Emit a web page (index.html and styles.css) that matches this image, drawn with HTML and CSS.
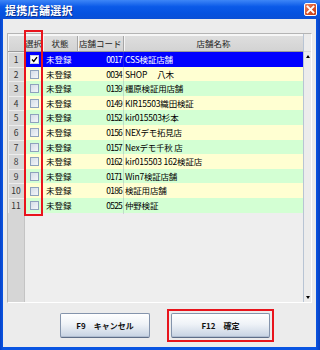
FILE: index.html
```html
<!DOCTYPE html>
<html lang="ja">
<head>
<meta charset="utf-8">
<link rel="stylesheet" href="styles.css">
</head>
<body>
<div class="window">
  <div class="titlebar">
    <span class="title">提携店舗選択</span>
    <span class="close"><svg width="11" height="11" viewBox="0 0 11 11"><path d="M2.5 2.5 L8.5 8.5 M8.5 2.5 L2.5 8.5" stroke="#fff" stroke-width="1.8" stroke-linecap="square"/></svg></span>
  </div>
  <div class="client">
    <div class="tablebox">
      <div class="grid">
        <div class="hdr">
          <div class="hc corner"></div>
          <div class="hc">選択</div>
          <div class="hc">状態</div>
          <div class="hc left">店舗コード</div>
          <div class="hc last">店舗名称</div>
        </div>
        <div class="row sel"><div class="rh">1</div><div class="chk"><span class="box on"><svg width="7" height="7" viewBox="0 0 7 7"><path d="M1 3.5 L2.8 5.5 L6 1.2" stroke="#000" stroke-width="1.4" fill="none"/></svg></span></div><div class="st">未登録</div><div class="cd">0017</div><div class="nm">CSS検証店舗</div></div>
        <div class="row y"><div class="rh">2</div><div class="chk"><span class="box"></span></div><div class="st">未登録</div><div class="cd">0034</div><div class="nm">SHOP　 八木</div></div>
        <div class="row g"><div class="rh">3</div><div class="chk"><span class="box"></span></div><div class="st">未登録</div><div class="cd">0139</div><div class="nm">橿原検証用店舗</div></div>
        <div class="row y"><div class="rh">4</div><div class="chk"><span class="box"></span></div><div class="st">未登録</div><div class="cd">0149</div><div class="nm">KIR15503織田検証</div></div>
        <div class="row g"><div class="rh">5</div><div class="chk"><span class="box"></span></div><div class="st">未登録</div><div class="cd">0152</div><div class="nm">kir015503杉本</div></div>
        <div class="row y"><div class="rh">6</div><div class="chk"><span class="box"></span></div><div class="st">未登録</div><div class="cd">0156</div><div class="nm">NEXデモ拓見店</div></div>
        <div class="row g"><div class="rh">7</div><div class="chk"><span class="box"></span></div><div class="st">未登録</div><div class="cd">0157</div><div class="nm">Nexデモ千秋 店</div></div>
        <div class="row y"><div class="rh">8</div><div class="chk"><span class="box"></span></div><div class="st">未登録</div><div class="cd">0162</div><div class="nm">kir015503 162検証店</div></div>
        <div class="row g"><div class="rh">9</div><div class="chk"><span class="box"></span></div><div class="st">未登録</div><div class="cd">0171</div><div class="nm">Win7検証店舗</div></div>
        <div class="row y"><div class="rh">10</div><div class="chk"><span class="box"></span></div><div class="st">未登録</div><div class="cd">0186</div><div class="nm">検証用店舗</div></div>
        <div class="row g"><div class="rh">11</div><div class="chk"><span class="box"></span></div><div class="st">未登録</div><div class="cd">0525</div><div class="nm">仲野検証</div></div>
        <div class="filler"><div class="rh-fill"></div></div>
      </div>
      <div class="scrollbar">
        <div class="sb-top"></div>
        <div class="sb-btn"><span class="arrow-up"></span></div>
        <div class="sb-track"></div>
        <div class="sb-btn"><span class="arrow-down"></span></div>
      </div>
      <div class="highlight"></div>
    </div>
    <div class="buttons">
      <button class="btn cancel">F9　キャンセル</button>
      <div class="redbox"><button class="btn ok">F12　確定</button></div>
    </div>
  </div>
</div>
</body>
</html>
```

FILE: styles.css
```css
html, body {
  margin: 0;
  padding: 0;
}
body {
  width: 320px;
  height: 350px;
  overflow: hidden;
  font-family: "Noto Sans CJK JP", "Noto Sans", sans-serif;
  background: #0a50dc;
}
.window {
  width: 320px;
  height: 350px;
  display: flex;
  flex-direction: column;
  background: linear-gradient(90deg, #0842c8, #0a55e2 3px, #0a55e2 316px, #0840c0);
}
.titlebar {
  height: 19px;
  flex: none;
  display: flex;
  align-items: center;
  justify-content: space-between;
  padding: 0 3px 0 5px;
  background: linear-gradient(#3d86f7, #0b5ae8 35%, #0552e0 70%, #0a4fd6);
}
.title {
  color: #fff;
  font-weight: bold;
  font-size: 11px;
  letter-spacing: 0.3px;
  text-shadow: 1px 1px 0 #0a2f8f;
}
.close {
  width: 11px;
  height: 11px;
  border: 1px solid #fff;
  border-radius: 2px;
  background: linear-gradient(135deg, #ee8a6a, #d9542c 50%, #c23c16);
  display: flex;
  align-items: center;
  justify-content: center;
}
.client {
  flex: 1;
  margin: 0 4px 3px 3px;
  background: #ececec;
  display: flex;
  flex-direction: column;
}
.tablebox {
  position: relative;
  margin: 14px 0 0 4px;
  width: 305px;
  height: 270px;
  box-sizing: border-box;
  border: 1px solid;
  border-color: #b4b4b4 #ffffff #ffffff #b4b4b4;
  display: flex;
}
.grid {
  width: 295px;
  display: flex;
  flex-direction: column;
  background: #eeeeee;
}
.hdr, .row {
  display: grid;
  grid-template-columns: 17px 18px 35px 46px 179px;
}
.hdr {
  height: 18px;
  box-sizing: border-box;
  border-top: 2px solid #f6f6f6;
  background: linear-gradient(#dedede, #d3d3d3);
  border-bottom: 1px solid #9a9a9a;
}
.hc {
  font-size: 8.5px;
  line-height: 15px;
  color: #222;
  text-align: center;
  border-right: 1px solid #a6a6a6;
  box-shadow: inset 1px 0 0 #f4f4f4;
  white-space: nowrap;
  overflow: hidden;
}
.hc.left {
  text-align: left;
  padding-left: 1px;
}
.hc.last {
  border-right: none;
}
.row {
  height: 14.6px;
  font-size: 8.5px;
  line-height: 14.6px;
  color: #000;
}
.row.y { background: #ffffd2; }
.row.g { background: #d3ffd3; }
.row.sel { background: #0000ff; color: #fff; }
.rh {
  background: #d6d6d6;
  color: #333;
  text-align: center;
  box-sizing: border-box;
  border-right: 1px solid #a8a8a8;
  border-bottom: 1px solid #bcbcbc;
  box-shadow: inset 1px 1px 0 #ececec;
}
.chk {
  display: flex;
  align-items: center;
  justify-content: center;
}
.box {
  width: 9px;
  height: 9px;
  box-sizing: border-box;
  border: 1px solid #8ea2bd;
  background: linear-gradient(135deg, #d5dde8, #f4f6f9);
  display: flex;
  align-items: center;
  justify-content: center;
}
.box.on {
  background: #fff;
  border-color: #c8d0dc;
}
.st {
  padding-left: 3px;
  white-space: nowrap;
}
.cd {
  text-align: right;
  letter-spacing: -0.8px;
  padding-right: 1px;
  border-right: 1px solid rgba(120, 120, 160, 0.25);
}
.nm {
  padding-left: 1px;
  white-space: nowrap;
  overflow: hidden;
  letter-spacing: -0.2px;
}
.filler {
  flex: 1;
  display: flex;
}
.rh-fill {
  width: 17px;
  background: #d6d6d6;
  border-right: 1px solid #c4c4c4;
  box-sizing: border-box;
}
.scrollbar {
  width: 8px;
  box-sizing: border-box;
  border-left: 1px solid #b8c4d4;
  background: #ececec;
  display: flex;
  flex-direction: column;
}
.sb-top {
  height: 17px;
  border-bottom: 1px solid #d8d8d8;
}
.sb-btn {
  height: 9px;
  display: flex;
  align-items: center;
  justify-content: center;
}
.sb-track {
  flex: 1;
}
.arrow-up {
  width: 0;
  height: 0;
  border-left: 2.5px solid transparent;
  border-right: 2.5px solid transparent;
  border-bottom: 3px solid #000;
}
.arrow-down {
  width: 0;
  height: 0;
  border-left: 2.5px solid transparent;
  border-right: 2.5px solid transparent;
  border-top: 3px solid #000;
}
.highlight {
  position: absolute;
  left: 16px;
  top: -4px;
  width: 19px;
  height: 186px;
  box-sizing: border-box;
  border: 2px solid #e8141c;
}
.buttons {
  flex: 1;
  display: flex;
  align-items: center;
  padding-left: 57px;
  gap: 17px;
}
.btn {
  height: 25px;
  padding: 0;
  font-family: "Noto Sans CJK JP", "Noto Sans", sans-serif;
  font-weight: bold;
  font-size: 8px;
  color: #111;
  border: 1px solid #8494ac;
  border-bottom-color: #5e6e88;
  border-radius: 2px;
  background: linear-gradient(#ffffff, #eef2f7 45%, #c6d2e2);
  box-shadow: inset 0 -1px 0 #b0bdd0;
}
.cancel {
  width: 90px;
}
.ok {
  width: 99px;
  display: block;
}
.redbox {
  border: 2px solid #e8141c;
  padding: 2px;
}
```
